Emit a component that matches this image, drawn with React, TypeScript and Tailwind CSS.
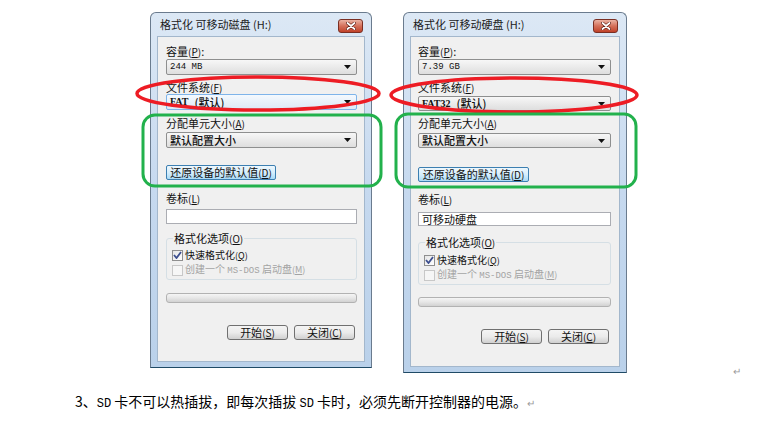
import React from 'react';

const cjk = "font-['Noto_Sans_CJK_SC','Noto_Sans',sans-serif]";
const mono = "font-['Liberation_Mono','Noto_Sans_CJK_SC',monospace]";

const Key = ({ k, small }: { k: string; small?: boolean }) => (
  <span className={small ? 'text-[9px]' : 'text-[10px]'}>
    (<span className="underline">{k}</span>)
  </span>
);

const Arrow = () => (
  <svg width="7" height="4" viewBox="0 0 7 4" className="shrink-0">
    <path d="M0 0h7L3.5 4z" fill="#111" />
  </svg>
);

const Select = ({ children, focus, cls }: { children: React.ReactNode; focus?: boolean; cls: string }) => (
  <div
    className={`flex items-center justify-between rounded-[2px] border pl-[3px] pr-[5px] ${cls} ${
      focus
        ? 'border-[#7eb4ea] bg-gradient-to-b from-[#f4f9fe] to-[#dde9f6]'
        : 'border-[#8e8f8f] bg-gradient-to-b from-[#f7f7f7] to-[#dedede]'
    }`}
  >
    <div className="flex items-center leading-none text-[#111]">{children}</div>
    <Arrow />
  </div>
);

const CloseBtn = () => (
  <div className="mt-[2px] flex h-[14px] w-[25px] items-center justify-center rounded-[3px] border border-[#7a2f23] bg-gradient-to-b from-[#eab2a3] via-[#d4705a] to-[#c04128]">
    <svg width="10" height="8" viewBox="0 0 10 8">
      <path d="M1.5 1l7 6M8.5 1l-7 6" stroke="#5a1a10" strokeWidth="3" strokeLinecap="round" />
      <path d="M1.5 1l7 6M8.5 1l-7 6" stroke="#fff" strokeWidth="1.8" strokeLinecap="round" />
    </svg>
  </div>
);

const Check = ({ on }: { on: boolean }) => (
  <div
    className={`flex h-[11px] w-[11px] shrink-0 items-center justify-center border ${
      on ? 'border-[#8f8f8f] bg-gradient-to-br from-[#e6e6e6] to-white' : 'border-[#c8c8c8] bg-[#f6f6f6]'
    }`}
  >
    {on && (
      <svg width="9" height="8" viewBox="0 0 9 8">
        <path d="M1 4l2.5 3L8 1" stroke="#3d4f8f" strokeWidth="1.8" fill="none" />
      </svg>
    )}
  </div>
);

const Btn = ({ children }: { children: React.ReactNode }) => (
  <div className="flex h-[15px] w-[61px] items-center justify-center rounded-[3px] border border-[#707070] bg-gradient-to-b from-[#f4f4f4] via-[#ebebeb] to-[#d0d0d0] text-[11px] leading-none text-[#111]">
    {children}
  </div>
);

type DialogProps = { title: string; size: string; fs: string; volume: string; tall?: boolean };

function Dialog({ title, size, fs, volume, tall }: DialogProps) {
  return (
    <div
      className={`flex shrink-0 flex-col rounded-t-[6px] border border-[#6a7b8e] border-b-[#1f4a66] bg-gradient-to-b from-[#dce8f5] via-[#c6d9ef] to-[#bad1ea] ${cjk} ${
        tall ? 'h-[361px] w-[224px]' : 'h-[356px] w-[222px]'
      }`}
    >
      <div className="flex h-[23px] items-center justify-between pl-[9px] pr-[8px]">
        <span className="text-[11px] leading-none text-[#1b1b1b]">{title}</span>
        <CloseBtn />
      </div>
      <div
        className={`mx-[6px] flex flex-1 flex-col border border-[#a3b7cc] bg-[#f0f0f0] pt-[7px] text-[11px] text-[#111] ${
          tall ? 'pl-[7px] pr-[8px]' : 'pl-[8px] pr-[7px]'
        }`}
      >
        <div className="h-[14px] leading-[14px]">
          容量<Key k="P" />:
        </div>
        <Select cls="mt-[1px] h-[16px]">
          <span className={`${mono} text-[9px]`}>{size}</span>
        </Select>

        <div className="mt-[5px] h-[14px] leading-[14px]">
          文件系统<Key k="F" />
        </div>
        <Select focus={!tall} cls={tall ? 'mt-[2px] h-[15px]' : 'h-[16px]'}>
          <span className="font-['Liberation_Serif',serif] text-[10px] font-bold">{fs}</span>
          <span className="ml-[6px] text-[11px] font-medium">(默认)</span>
        </Select>

        <div className={`h-[14px] leading-[14px] ${tall ? 'mt-[5px]' : 'mt-[6px]'}`}>
          分配单元大小<Key k="A" />
        </div>
        <Select cls={tall ? 'mt-[3px] h-[15px]' : 'mt-[2px] h-[16px]'}>
          <span className="text-[11px] font-medium">默认配置大小</span>
        </Select>

        <div
          className={`flex h-[15px] items-center justify-center rounded-[2px] border border-[#3c7fb1] bg-gradient-to-b from-[#edf7fd] via-[#d6eefc] to-[#a9daf6] leading-none ${
            tall ? 'mt-[19px] w-[111px]' : 'mt-[17px] w-[110px]'
          }`}
        >
          还原设备的默认值<Key k="D" />
        </div>

        <div className={`h-[14px] leading-[14px] ${tall ? 'mt-[10px]' : 'mt-[11px]'}`}>
          卷标<Key k="L" />
        </div>
        <div
          className={`flex items-center border border-[#abadb3] bg-white pl-[3px] leading-none ${
            tall ? 'mt-[6px] h-[14px]' : 'mt-[4px] h-[15px]'
          }`}
        >
          {volume}
        </div>

        <div
          className={`relative flex flex-col gap-[1px] rounded-[3px] border border-[#d5dfe5] pl-[5px] text-[10px] ${
            tall ? 'mt-[16px] h-[43px] pt-[10px]' : 'mt-[14px] h-[42px] pt-[9px]'
          }`}
        >
          <div className="absolute -top-[8px] left-[6px] bg-[#f0f0f0] px-[1px] text-[11px] leading-[14px]">
            格式化选项<Key k="O" />
          </div>
          <div className="flex h-[14px] items-center gap-[2px]">
            <Check on />
            <span className="leading-[14px]">
              快速格式化<Key k="Q" small />
            </span>
          </div>
          <div className="flex h-[14px] items-center gap-[2px] text-[#a3a3a3]">
            <Check on={false} />
            <span className="leading-[14px]">
              创建一个 <span className={`${mono} text-[9px]`}>MS-DOS</span> 启动盘<Key k="M" small />
            </span>
          </div>
        </div>

        <div
          className={`h-[10px] rounded-[3px] border border-[#b2b2b2] bg-gradient-to-b from-[#f5f5f5] via-[#e6e6e6] to-[#d2d2d2] ${
            tall ? 'mt-[12px]' : 'mt-[13px]'
          }`}
        />

        <div className="mt-[22px] flex justify-end gap-[6px] pr-[2px]">
          <Btn>
            开始<Key k="S" />
          </Btn>
          <Btn>
            关闭<Key k="C" />
          </Btn>
        </div>
      </div>
      <div className="h-[5px] shrink-0" />
    </div>
  );
}

export default function App() {
  return (
    <div className="relative h-[430px] w-[782px] overflow-hidden bg-white">
      <div className="flex items-start pl-[150px] pt-[12px]">
        <Dialog title="格式化 可移动磁盘 (H:)" size="244 MB" fs="FAT" volume="" />
        <div className="w-[31px] shrink-0" />
        <Dialog title="格式化 可移动硬盘 (H:)" size="7.39 GB" fs="FAT32" volume="可移动硬盘" tall />
        <span className={`ml-[106px] mt-[354px] text-[10px] leading-none text-[#9a9a9a] ${cjk}`}>↵</span>
      </div>

      <p className={`mt-[16px] pl-[75px] text-[14px] leading-[18px] text-black ${cjk}`}>
        3、<span className={`${mono} text-[12px]`}>SD</span> 卡不可以热插拔，即每次插拔{' '}
        <span className={`${mono} text-[12px]`}>SD</span> 卡时，必须先断开控制器的电源。
        <span className="text-[10px] text-[#9a9a9a]">↵</span>
      </p>

      <svg className="pointer-events-none absolute inset-0" width="782" height="430" viewBox="0 0 782 430">
        <ellipse cx="258" cy="93.5" rx="121" ry="16.5" fill="none" stroke="#ed1c24" strokeWidth="3.5" />
        <ellipse cx="514" cy="95" rx="123" ry="17" fill="none" stroke="#ed1c24" strokeWidth="3.5" />
        <rect x="143" y="115" width="238" height="71" rx="12" fill="none" stroke="#22b14c" strokeWidth="3" />
        <rect x="396" y="114" width="240" height="73" rx="12" fill="none" stroke="#22b14c" strokeWidth="3" />
      </svg>
    </div>
  );
}
